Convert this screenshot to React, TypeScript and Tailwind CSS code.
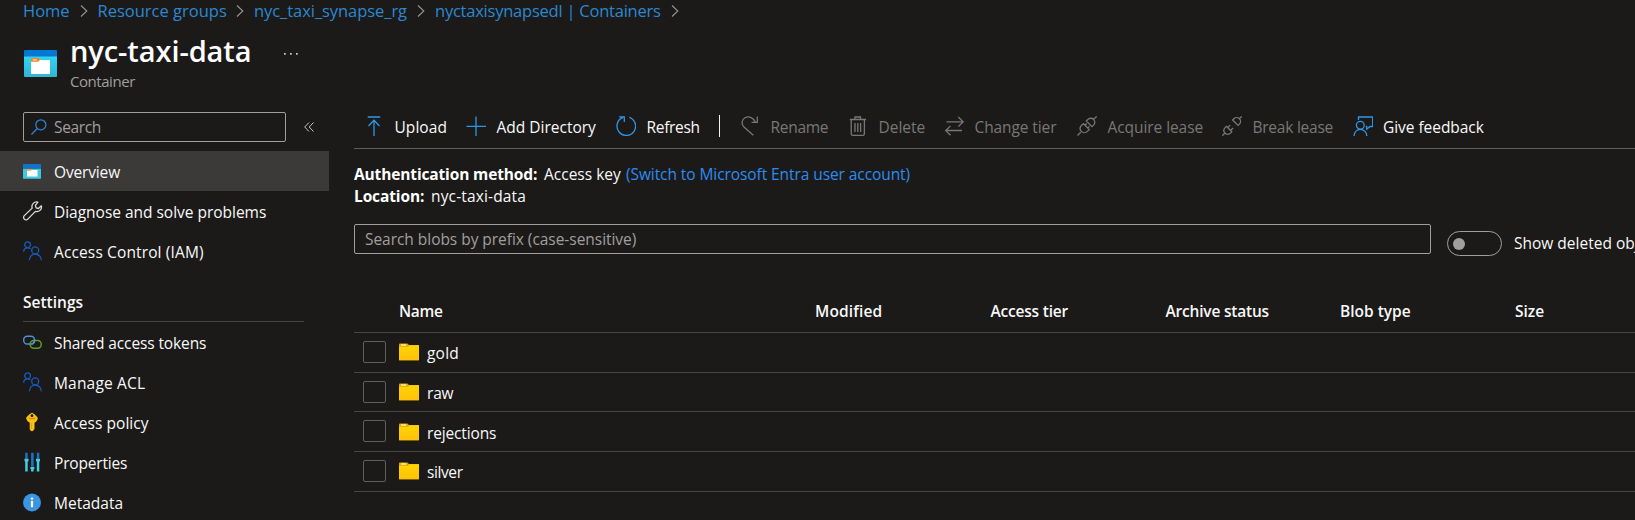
import type { ReactNode } from 'react';

type IconProps = { children: ReactNode; className?: string };

function Icon({ children, className = '' }: IconProps) {
  return (
    <svg viewBox="0 0 20 20" fill="none" stroke="currentColor" strokeWidth="1.3" className={`h-5 w-5 shrink-0 ${className}`}>
      {children}
    </svg>
  );
}

const ContainerIcon = () => (
  <Icon>
    <g stroke="none">
      <path d="M0 7.500H18V17a.7.7 0 0 1-.7.7H.7A.7.7 0 0 1 0 17Z" fill="#3fc9e0" />
      <path d="M.7 3H17.300a.7.7 0 0 1 .7.7V7.500H0V3.700A.7.7 0 0 1 .7 3Z" fill="#1173c8" />
      <rect x="4" y="8" width="5" height="2.500" rx=".6" fill="#e0a05a" />
      <path d="M4 9.800H7.500L8.500 9H14.500V15.500H4Z" fill="#fff" />
    </g>
  </Icon>
);

const WrenchIcon = () => (
  <Icon className="text-[#dddbd9]">
    <path d="M14.900 1.200a4.600 4.600 0 0 0-5.700 5.900L1.300 14.600a2.350 2.350 0 0 0 3.500 3.500l7.600-7.700a4.600 4.600 0 0 0 5.900-5.600l-2.900 2.700-2.300-.6-.7-2.500Z" strokeLinejoin="round" />
  </Icon>
);

const PeopleIcon = () => (
  <Icon className="text-[#185abd]">
    <circle cx="4.600" cy="3.800" r="2.900" />
    <path d="M.6 10.800C.7 8.400 2.400 6.800 4.700 6.800c1.200 0 2.100.4 2.800 1.100" />
    <circle cx="12.200" cy="9.400" r="3.500" />
    <path d="M6.400 19.200c.2-3.600 2.600-6.200 5.800-6.200s5.900 2.600 6.200 6.200" />
  </Icon>
);

const LinkIcon = () => (
  <Icon>
    <rect x=".7" y="4.300" width="10.800" height="7.700" rx="3.600" stroke="#4d8fd6" strokeWidth="1.500" />
    <rect x="7.200" y="8.600" width="11" height="7.600" rx="3.600" stroke="#5f9a2a" strokeWidth="1.500" />
    <path d="M11.500 7.500v1.200c0 1.700-1.200 3.100-3.200 3.300" stroke="#4d8fd6" strokeWidth="1.500" />
  </Icon>
);

const KeyIcon = () => (
  <Icon>
    <path fillRule="evenodd" d="M9 .8c.8 0 5.800 4 5.800 5.400 0 1.300-1.600 3.600-3.300 4.600v5.600c0 .8-1.700 2.800-2.500 2.800s-2.300-1.300-2.300-2.200v-6.200C4.800 9.700 3.200 7.500 3.200 6.200 3.200 4.800 8.200.8 9 .8Zm0 1.500a1.400 1.400 0 1 0 0 2.800 1.400 1.400 0 0 0 0-2.800Z" fill="#fbc014" stroke="none" />
    <path d="M5.800 6.500h6.500" stroke="#e08a00" strokeWidth="1.300" />
    <path d="M8.300 11v6" stroke="#e99a08" strokeWidth=".9" />
  </Icon>
);

const SlidersIcon = () => (
  <Icon>
    <g stroke="none">
      <path d="M2.200.8h2.500v6H2.200ZM8.100.8h2.600v14H8.100ZM13.800.8h2.500v6h-2.500Z" fill="#1a72c4" />
      <path d="M1.500 6.800h4V9l-.8.700v9.700H2.200V9.700L1.500 9ZM13 6.800h4V9l-.7.700v9.700h-2.500V9.700L13 9ZM7.400 15h4v1.700l-.8.900v1.800H8.100v-1.800l-.7-.9Z" fill="#45cbe4" />
    </g>
  </Icon>
);

const InfoIcon = () => (
  <Icon>
    <g stroke="none">
      <circle cx="9" cy="10.500" r="9" fill="#3a96e0" />
      <circle cx="9" cy="6.600" r="1.200" fill="#fff" />
      <rect x="7.900" y="8.700" width="2.200" height="6.600" rx=".4" fill="#fff" />
    </g>
  </Icon>
);

function NavItem({ icon, label, active, spacing = '' }: { icon: ReactNode; label: string; active?: boolean; spacing?: string }) {
  return (
    <div className={`flex h-10 w-[329px] items-center gap-[11px] pl-[23px] ${active ? 'bg-[#3b3a39]' : ''}`}>
      {icon}
      <span className={`pt-[2px] whitespace-nowrap ${spacing}`}>{label}</span>
    </div>
  );
}

function Tool({ icon, label, width, tone = '', spacing = '' }: { icon: ReactNode; label: string; width: string; tone?: string; spacing?: string }) {
  return (
    <div className={`flex shrink-0 items-center gap-[10.5px] ${width}`}>
      {icon}
      <span className={`pt-[2px] whitespace-nowrap ${tone} ${spacing}`}>{label}</span>
    </div>
  );
}

const BLUE = 'text-[#2f96e8]';
const MUTED = 'text-[#797775]';

function Crumb({ label, width, spacing = '' }: { label: string; width: string; spacing?: string }) {
  return (
    <div className={`flex shrink-0 items-center justify-between ${width}`}>
      <span className={`whitespace-nowrap ${spacing}`}>{label}</span>
      <svg viewBox="0 0 8 12" className="h-3 w-2 text-[#979593]" fill="none" stroke="currentColor" strokeWidth="1.100">
        <path d="M1 .5 6.800 6 1 11.500" />
      </svg>
    </div>
  );
}

const Folder = () => (
  <svg viewBox="0 0 20 18" className="h-[18px] w-5 shrink-0">
    <defs>
      <linearGradient id="folder" x1="0" y1="0" x2="0" y2="1">
        <stop offset="0" stopColor="#ffd400" />
        <stop offset="1" stopColor="#ffc20a" />
      </linearGradient>
    </defs>
    <path d="M0 1.200Q0 .5.7.500H8.400L10 2H19.300q.7 0 .7.700V17q0 .6-.7.600H.7Q0 17.600 0 17Z" fill="#dfa500" />
    <path d="M0 3.800H8.800L10.200 2.300H20V16.900H0Z" fill="url(#folder)" />
    <rect x="1.800" y="1.300" width="5.600" height="1.400" rx=".7" fill="#fff0b0" />
  </svg>
);

const folders = [
  { name: 'gold', height: 'h-10', offset: '', spacing: 'tracking-[0.2px]' },
  { name: 'raw', height: 'h-[39px]', offset: '', spacing: 'tracking-[-0.2px]' },
  { name: 'rejections', height: 'h-10', offset: 'mt-px', spacing: 'tracking-[-0.15px]' },
  { name: 'silver', height: 'h-10', offset: '', spacing: 'tracking-[-0.4px]' },
];

export default function App() {
  return (
    <div className="h-[520px] w-full overflow-hidden bg-[#1b1a19] font-['Open_Sans',sans-serif] text-[15.5px] leading-[20px] text-[#f8f8f8]">
      <nav className="flex h-[22px] gap-[10px] pl-[23px] text-[16.5px] leading-[22px] text-[#2b88d0]">
        <Crumb label="Home" width="w-[64.5px]" />
        <Crumb label="Resource groups" width="w-[146.5px]" />
        <Crumb label="nyc_taxi_synapse_rg" width="w-[171px]" spacing="tracking-[-0.06px]" />
        <Crumb label="nyctaxisynapsedl | Containers" width="w-[244px]" spacing="tracking-[-0.23px]" />
      </nav>

      <header className="flex h-[86px] pl-6 pt-[11px]">
        <svg viewBox="0 0 33 27" className="mt-[17px] h-[27px] w-[33px]">
          <defs>
            <linearGradient id="body" x1="0" y1="0" x2="0" y2="1">
              <stop offset="0" stopColor="#32d4f5" />
              <stop offset="1" stopColor="#31b5d3" />
            </linearGradient>
          </defs>
          <path d="M0 6H33V26q0 1-1 1H1Q0 27 0 26Z" fill="url(#body)" />
          <path d="M1 0H32q1 0 1 1V6.500H0V1Q0 0 1 0Z" fill="#0078d4" />
          <path d="M7 8.800q0-.8.8-.8h6.600q.6 0 1 .5L17 10.500V13H7Z" fill="#e8882a" />
          <path d="M7 11.800H14l2-1.800H25.300q.7 0 .7.700V23.300q0 .7-.7.700H7.700q-.7 0-.7-.7Z" fill="#fff" />
          <rect x="8.500" y="9.200" width="4.500" height="1.200" rx=".6" fill="#f6d9b5" />
        </svg>
        <div className="ml-[13px] flex w-[213px] flex-col">
          <h1 className="h-[38px] text-[29px] leading-[36px] font-semibold tracking-[-0.08px] whitespace-nowrap text-white">nyc-taxi-data</h1>
          <span className="text-[15px] leading-[21px] tracking-[-0.45px] text-[#a19f9d]">Container</span>
        </div>
        <svg viewBox="0 0 14 2" className="mt-[20px] ml-px h-[2px] w-[14px] fill-[#d2d0ce]">
          <rect x="0" width="1.700" height="1.700" /><rect x="6" width="1.700" height="1.700" /><rect x="12" width="1.700" height="1.700" />
        </svg>
      </header>

      <div className="flex">
        <aside className="w-[354px] shrink-0 pt-1">
          <div className="flex h-[39px] pl-[23px]">
            <div className="flex h-[30px] w-[263px] items-center rounded-[2px] border border-[#a19f9d] pl-[7px]">
              <Icon className="h-4! w-4! text-[#2b88d8]">
                <circle cx="12.300" cy="7.300" r="6.300" strokeWidth="1.500" />
                <path d="M7.800 11.800.5 19.300" strokeWidth="1.600" />
              </Icon>
              <span className="ml-[7px] tracking-[-0.37px] text-[#a19f9d]">Search</span>
            </div>
            <svg viewBox="0 0 10 10" className="mt-[10px] ml-[18px] h-[10px] w-[10px]" fill="none" stroke="#c8c6c4" strokeWidth="1">
              <path d="M5 .5.700 5 5 9.500M9.500.5 5.200 5 9.500 9.500" />
            </svg>
          </div>
          <NavItem active icon={<ContainerIcon />} label="Overview" spacing="tracking-[-0.15px]" />
          <NavItem icon={<WrenchIcon />} label="Diagnose and solve problems" spacing="tracking-[-0.02px]" />
          <NavItem icon={<PeopleIcon />} label="Access Control (IAM)" spacing="tracking-[0.13px]" />
          <div className="ml-[23px] flex h-[51px] w-[281px] items-end border-b border-[#484644] pb-[9px]">
            <h2 className="font-semibold">Settings</h2>
          </div>
          <NavItem icon={<LinkIcon />} label="Shared access tokens" spacing="tracking-[-0.12px]" />
          <NavItem icon={<PeopleIcon />} label="Manage ACL" spacing="tracking-[0.18px]" />
          <NavItem icon={<KeyIcon />} label="Access policy" spacing="tracking-[0.05px]" />
          <NavItem icon={<SlidersIcon />} label="Properties" spacing="tracking-[-0.18px]" />
          <NavItem icon={<InfoIcon />} label="Metadata" />
        </aside>

        <main className="min-w-0 flex-1 overflow-hidden">
          <div className="flex h-[41px] border-b border-[#605e5c] pb-1 pl-[10px]">
            <Tool width="w-[102px]" label="Upload" spacing="tracking-[0.05px]" icon={<Icon className={BLUE}><path d="M3.700 1H16.200M10 20V4.500M4.500 10 10 4.300 15.500 10" /></Icon>} />
            <Tool width="w-[150px]" label="Add Directory" icon={<Icon className={BLUE}><path d="M10 .5V20M.5 10.300H20" /></Icon>} />
            <Tool width="w-[103px]" label="Refresh" spacing="tracking-[-0.3px]" icon={<Icon className={BLUE}><path d="M13.300 1.300A9.300 9.300 0 1 1 7 1.400M3.200.9H8.300V6" /></Icon>} />
            <div className="mt-[7px] mr-5 h-[22px] w-px shrink-0 bg-[#f3f2f1]" />
            <Tool width="w-[108px]" label="Rename" tone={MUTED} spacing="tracking-[-0.3px]" icon={<Icon className={MUTED}><path d="M13.300 19.300 4.200 11.200C.9 8 1.700 3.600 5 1.800c4.200-2.200 8.800.1 10.500 4.400M17.300.5V6.400H11.500" /></Icon>} />
            <Tool width="w-[96px]" label="Delete" tone={MUTED} icon={<Icon className={MUTED}><path d="M1.800 3.500H18M7 3.300V1h5.500V3.300M3.200 3.700V17.700q0 1.600 1.600 1.600h10q1.600 0 1.600-1.600V3.700M7 7V16M9.800 7V16M12.600 7V16" /></Icon>} />
            <Tool width="w-[133px]" label="Change tier" tone={MUTED} spacing="tracking-[-0.1px]" icon={<Icon className={MUTED}><path d="M2.500 5.800H19M14.300 1l4.900 4.800-4.900 4.800M18 14.500H1.800M6.500 9.900l-4.800 4.700 4.800 4.700" /></Icon>} />
            <Tool width="w-[145px]" label="Acquire lease" tone={MUTED} spacing="tracking-[-0.07px]" icon={<Icon className={MUTED}><path d="M.5 19.500l3.300-3.300M16.200 3.800 19.700.400M6.500 7.700l5.800 5.800-1.900 1.900c-1.600 1.600-4.300 1.700-6 0s-1.500-4.200 0-5.900ZM9.300 5l5.700 5.700 1.600-1.600c1.600-1.600 1.600-4.100-.1-5.700s-4.200-1.500-5.700.1ZM8 9.200l1.600-1.700M10.800 12l1.700-1.600" /></Icon>} />
            <Tool width="w-[130.5px]" label="Break lease" tone={MUTED} spacing="tracking-[-0.24px]" icon={<Icon className={MUTED}><path d="M.3 19.700l2.500-2.500M17.400 2.700 19.800.300M4.400 10.300l5.400 5.400-1.300 1.400c-1.500 1.500-4 1.500-5.500 0s-1.400-3.900.1-5.500ZM10.600 4l5.500 5.400 1.300-1.300c1.500-1.500 1.500-3.900 0-5.400s-4-1.500-5.500 0ZM5.800 11.500l2.400-2.400M8.700 14.300l2.400-2.300" /></Icon>} />
            <Tool width="w-[140px]" label="Give feedback" spacing="tracking-[-0.05px]" icon={<Icon className={BLUE}><path d="M5.500 3.900V1H19.700V10.500H17L13.700 13.200V10.500H12.800" /><circle cx="7.300" cy="9.200" r="3.900" /><path d="M1 20c.3-4 3-6.700 6.300-6.700s6.300 2.700 6.600 6.700" /></Icon>} />
          </div>

          <div className="mt-[14px] leading-[22px] whitespace-nowrap">
            <div className="flex">
              <b className="w-[190px] tracking-[-0.14px] text-white">Authentication method:</b>
              <span className="w-[82px]">Access key</span>
              <a className="tracking-[-0.08px] text-[#2d8cf0]">(Switch to Microsoft Entra user account)</a>
            </div>
            <div className="flex">
              <b className="w-[77px] tracking-[-0.12px] text-white">Location:</b>
              <span className="tracking-[0.15px]">nyc-taxi-data</span>
            </div>
          </div>

          <div className="mt-[17px] flex h-[66px] whitespace-nowrap">
            <div className="flex h-[30px] w-[1077px] shrink-0 items-center rounded-[2px] border border-[#a19f9d] pl-[10px] tracking-[-0.04px] text-[#a19f9d]">
              Search blobs by prefix (case-sensitive)
            </div>
            <div className="mt-[7px] ml-4 flex h-[25px] w-[55px] shrink-0 items-center rounded-full border border-[#a19f9d] pl-[5px]">
              <div className="h-3 w-3 rounded-full bg-[#a19f9d]" />
            </div>
            <span className="mt-[9px] ml-[12px]">Show deleted objects</span>
          </div>

          <div className="grid h-[43px] grid-cols-[416px_175px_175px_175px_175px_175px] items-center border-b border-[#484644] pl-[45px] font-semibold whitespace-nowrap">
            <span className="tracking-[-0.3px]">Name</span>
            <span className="tracking-[0.15px]">Modified</span>
            <span className="pl-[0.5px] tracking-[-0.2px]">Access tier</span>
            <span className="pl-[0.5px] tracking-[-0.2px]">Archive status</span>
            <span>Blob type</span>
            <span>Size</span>
          </div>
          {folders.map((f) => (
            <div key={f.name} className={`flex border-b border-[#484644] pl-[9px] ${f.height}`}>
              <div className="mt-2 h-[22px] w-[23px] shrink-0 rounded-[2px] border border-[#605e5c]" />
              <div className={`flex pt-[10px] pl-[13px] ${f.offset}`}>
                <Folder />
                <span className={`ml-2 ${f.spacing}`}>{f.name}</span>
              </div>
            </div>
          ))}
        </main>
      </div>
    </div>
  );
}
